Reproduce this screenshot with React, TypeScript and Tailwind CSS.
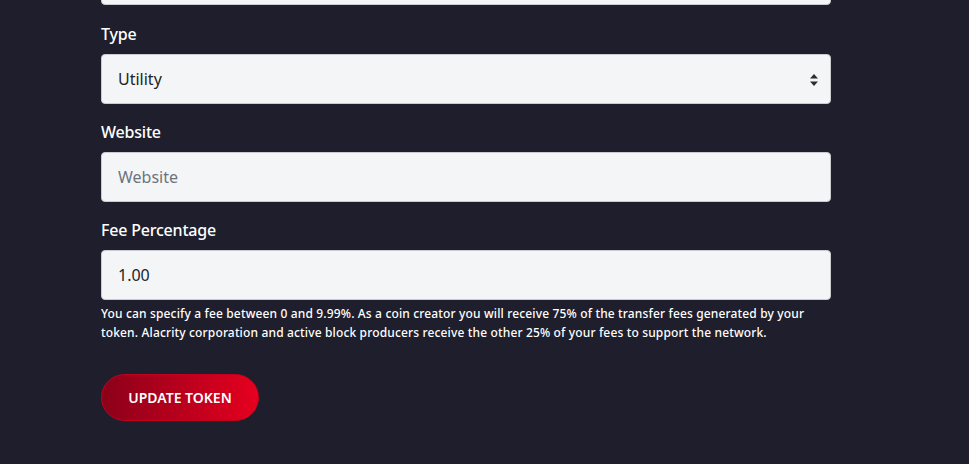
import React from "react";

export default function App() {
  const font = { fontFamily: '"Noto Sans", "Open Sans", sans-serif' };
  return (
    <div className="w-[969px] h-[464px] overflow-hidden bg-[#1e1e2c] text-white" style={font}>
      <div className="ml-[101px] w-[730px] -mt-[45px]">
        <div className="h-[50px] rounded-[4px] border border-[#c9cbd0] bg-[#f4f5f7]" />
        <label className="mt-[17px] mb-[8px] block text-[16px] leading-[24px] font-medium tracking-[-0.2px]">Type</label>
        <div className="relative flex h-[50px] items-center rounded-[4px] border border-[#c9cbd0] bg-[#f4f5f7] pl-[16px] text-[16px] text-[#212529]">
          Utility
          <svg className="absolute right-[12px] top-[19px]" width="8" height="12" viewBox="0 0 8 12">
            <path d="M4 0 L8 4.5 H0 Z M4 12 L8 7.5 H0 Z" fill="#2b2d33" />
          </svg>
        </div>
        <label className="mt-[16px] mb-[8px] block text-[16px] leading-[24px] font-medium tracking-[-0.2px]">Website</label>
        <input
          placeholder="Website"
          className="block h-[50px] w-full rounded-[4px] border border-[#c9cbd0] bg-[#f4f5f7] pl-[16px] text-[16px] text-[#212529] placeholder:text-[#6c737c] outline-none"
          style={font}
        />
        <label className="mt-[16px] mb-[8px] block text-[16px] leading-[24px] font-medium tracking-[-0.2px]">Fee Percentage</label>
        <input
          defaultValue="1.00"
          className="block h-[50px] w-full rounded-[4px] border border-[#c9cbd0] bg-[#f4f5f7] pl-[16px] text-[16px] text-[#212529] outline-none"
          style={font}
        />
        <p className="mt-[4px] text-[12px] leading-[19px] font-medium tracking-[0.15px]">
          You can specify a fee between 0 and 9.99%. As a coin creator you will receive 75% of the transfer fees generated by your token. Alacrity corporation and active block producers receive the other 25% of your fees to support the network.
        </p>
        <button
          className="mt-[32px] flex h-[47px] w-[158px] items-center justify-center rounded-full border border-[#c4001c] bg-gradient-to-r from-[#8c0019] to-[#e6001f] text-[14px] font-semibold text-white"
          style={font}
        >
          UPDATE TOKEN
        </button>
      </div>
    </div>
  );
}
